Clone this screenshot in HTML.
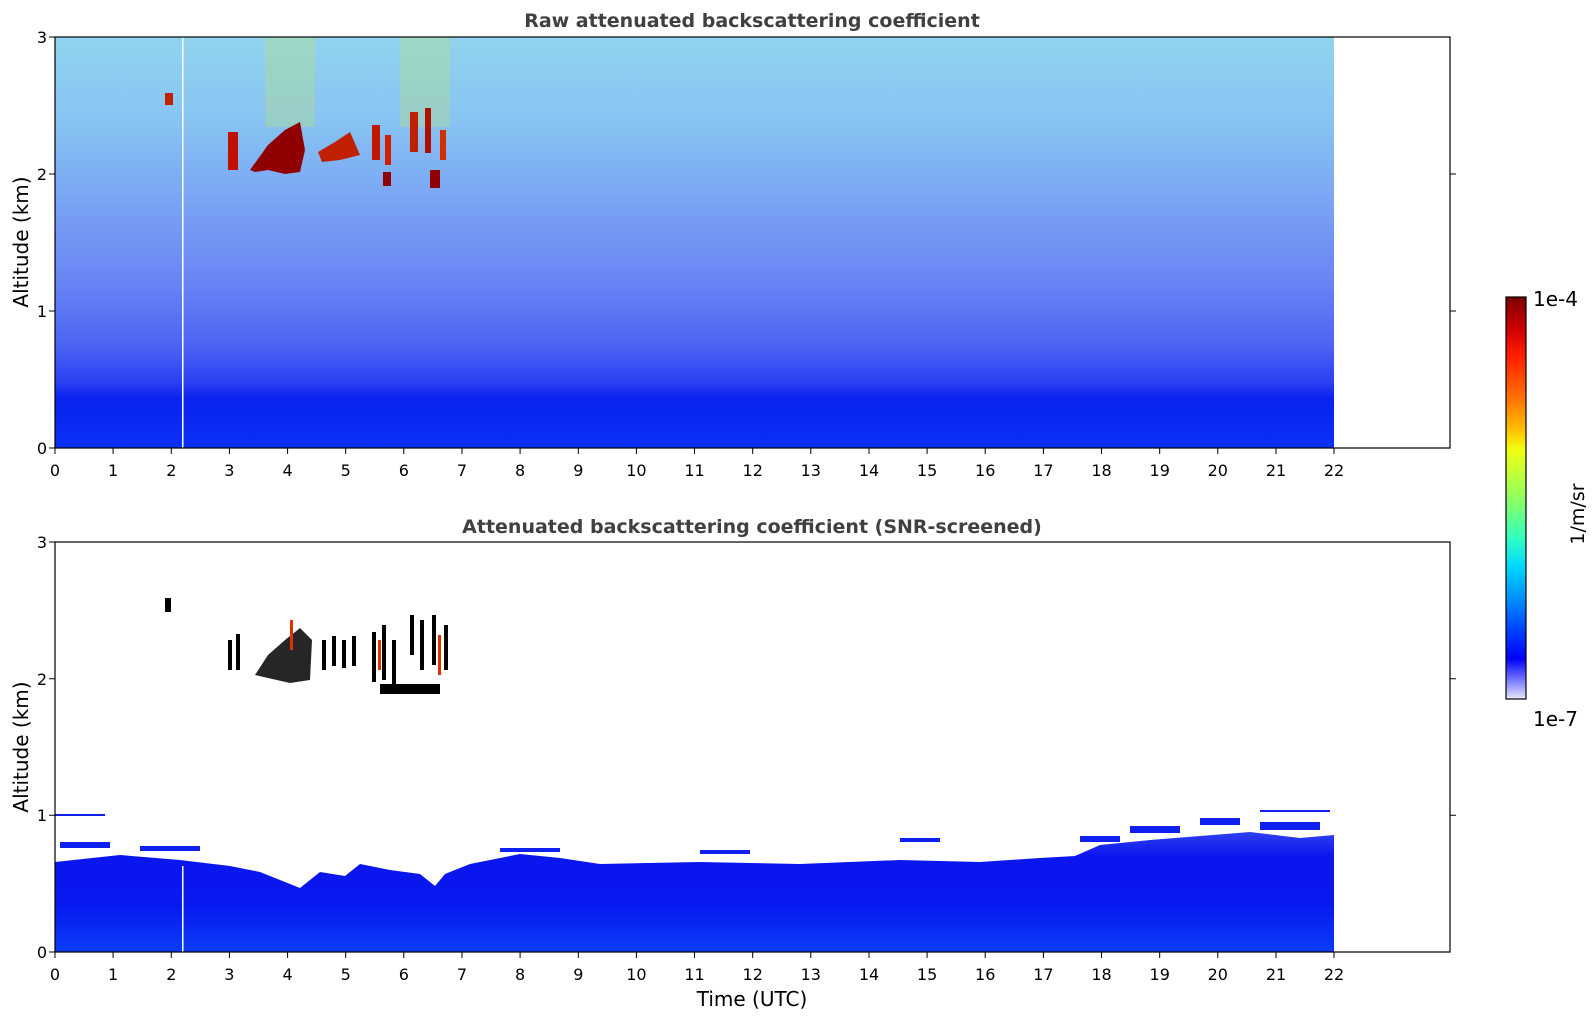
<!DOCTYPE html>
<html><head><meta charset="utf-8"><style>
html,body{margin:0;padding:0;background:#fff;width:1595px;height:1020px;overflow:hidden}
svg text{font-family:"DejaVu Sans","Liberation Sans",sans-serif}
</style></head><body>
<svg width="1595" height="1020" viewBox="0 0 1595 1020" xmlns="http://www.w3.org/2000/svg">
<defs>
<linearGradient id="top" x1="0" y1="0" x2="0" y2="1">
<stop offset="0" stop-color="#90d4ee"/>
<stop offset="0.2" stop-color="#88c4f2"/>
<stop offset="0.4" stop-color="#7aa4f4"/>
<stop offset="0.6" stop-color="#6884f4"/>
<stop offset="0.75" stop-color="#4c64f4"/>
<stop offset="0.84" stop-color="#2a40f2"/>
<stop offset="0.88" stop-color="#0a22f0"/>
<stop offset="1" stop-color="#0a30f6"/>
</linearGradient>
<linearGradient id="bot" x1="0" y1="0" x2="0" y2="1">
<stop offset="0" stop-color="#3040f0"/>
<stop offset="0.2" stop-color="#0a16ee"/>
<stop offset="0.6" stop-color="#0818ee"/>
<stop offset="1" stop-color="#0a3cf8"/>
</linearGradient>
<linearGradient id="cb" x1="0" y1="0" x2="0" y2="1">
<stop offset="0" stop-color="#7a0000"/>
<stop offset="0.08" stop-color="#d00000"/>
<stop offset="0.15" stop-color="#ff2000"/>
<stop offset="0.25" stop-color="#ff7000"/>
<stop offset="0.33" stop-color="#ffc000"/>
<stop offset="0.38" stop-color="#f0ff10"/>
<stop offset="0.5" stop-color="#90ff60"/>
<stop offset="0.6" stop-color="#30ffc0"/>
<stop offset="0.67" stop-color="#00d8ff"/>
<stop offset="0.75" stop-color="#0090ff"/>
<stop offset="0.83" stop-color="#0040ff"/>
<stop offset="0.9" stop-color="#0000f8"/>
<stop offset="0.95" stop-color="#7070ff"/>
<stop offset="1" stop-color="#e8e8ff"/>
</linearGradient>
</defs>

<!-- TOP PLOT -->
<rect x="55" y="37" width="1279" height="411" fill="url(#top)"/>
<rect x="182" y="37" width="1.5" height="411" fill="#fff"/>
<g fill="#b8e07a" opacity="0.35">
<rect x="265" y="37" width="50" height="90"/>
<rect x="400" y="37" width="50" height="90"/>
</g>
<!-- clouds top -->
<g>
<path d="M250 170 L268 145 L285 130 L300 122 L305 150 L300 172 L285 174 L268 170 L255 172Z" fill="#900000"/>
<rect x="228" y="132" width="10" height="38" fill="#c01000"/>
<path d="M318 152 L335 142 L350 132 L360 155 L340 160 L322 162Z" fill="#c02000"/>
<rect x="372" y="125" width="8" height="35" fill="#c01800"/>
<rect x="385" y="135" width="6" height="30" fill="#d02000"/>
<rect x="410" y="112" width="8" height="40" fill="#c02000"/>
<rect x="425" y="108" width="6" height="45" fill="#b01000"/>
<rect x="440" y="130" width="6" height="30" fill="#d03000"/>
<rect x="383" y="172" width="8" height="14" fill="#900000"/>
<rect x="430" y="170" width="10" height="18" fill="#900000"/>
<rect x="165" y="93" width="8" height="12" fill="#c02000"/>
</g>
<rect x="55" y="37" width="1395" height="411" fill="none" stroke="#000" stroke-width="1.2"/>

<!-- BOTTOM PLOT -->
<path d="M55 862 L120 855 L180 860 L230 866 L260 872 L280 880 L300 888 L320 872 L345 876 L360 864 L390 870 L420 874 L435 886 L445 874 L470 864 L520 854 L560 858 L600 864 L700 862 L800 864 L900 860 L980 862 L1040 858 L1075 856 L1100 845 L1150 840 L1200 836 L1250 832 L1300 838 L1334 835 L1334 952 L55 952Z" fill="url(#bot)"/>
<g fill="#1020f0">
<rect x="60" y="842" width="50" height="6"/><rect x="140" y="846" width="60" height="5"/><rect x="1080" y="836" width="40" height="6"/>
<rect x="1130" y="826" width="50" height="7"/><rect x="1200" y="818" width="40" height="7"/><rect x="1260" y="822" width="60" height="8"/>
<rect x="900" y="838" width="40" height="4"/>
<rect x="500" y="848" width="60" height="4"/><rect x="700" y="850" width="50" height="4"/><rect x="55" y="814" width="50" height="2"/>
<rect x="1260" y="810" width="70" height="2"/>
</g>
<rect x="182" y="866" width="1.5" height="86" fill="#fff"/>
<!-- clouds bottom (streaks) -->
<g fill="#000">
<rect x="165" y="598" width="6" height="14"/>
<rect x="228" y="640" width="4" height="30"/><rect x="236" y="634" width="4" height="36"/>
<path d="M255 675 L268 655 L285 640 L300 628 L312 640 L310 680 L290 683 L268 678Z" opacity="0.85"/>
<rect x="322" y="640" width="4" height="30"/><rect x="332" y="636" width="4" height="30"/><rect x="342" y="640" width="4" height="28"/><rect x="352" y="636" width="4" height="30"/>
<rect x="372" y="632" width="4" height="50"/><rect x="382" y="625" width="4" height="55"/><rect x="392" y="640" width="4" height="50"/>
<rect x="410" y="615" width="4" height="40"/><rect x="420" y="620" width="4" height="50"/><rect x="432" y="615" width="4" height="50"/><rect x="444" y="625" width="4" height="45"/>
<rect x="380" y="684" width="60" height="10"/>
</g>
<g fill="#e03000"><rect x="290" y="620" width="3" height="30"/><rect x="438" y="635" width="3" height="40"/><rect x="378" y="640" width="3" height="30"/></g>
<rect x="55" y="542" width="1395" height="410" fill="none" stroke="#000" stroke-width="1.2"/>

<!-- ticks -->
<g stroke="#000" stroke-width="1">
<path d="M55 448v6M113.1 448v6M171.3 448v6M229.4 448v6M287.6 448v6M345.7 448v6M403.8 448v6M462 448v6M520.1 448v6M578.3 448v6M636.4 448v6M694.5 448v6M752.7 448v6M810.8 448v6M869 448v6M927.1 448v6M985.2 448v6M1043.4 448v6M1101.5 448v6M1159.7 448v6M1217.8 448v6M1276 448v6M1334 448v6"/>
<path d="M55 952v6M113.1 952v6M171.3 952v6M229.4 952v6M287.6 952v6M345.7 952v6M403.8 952v6M462 952v6M520.1 952v6M578.3 952v6M636.4 952v6M694.5 952v6M752.7 952v6M810.8 952v6M869 952v6M927.1 952v6M985.2 952v6M1043.4 952v6M1101.5 952v6M1159.7 952v6M1217.8 952v6M1276 952v6M1334 952v6"/>
<path d="M55 448h-6M55 311h-6M55 174h-6M55 37h-6M1450 311h6M1450 174h6"/>
<path d="M55 952h-6M55 815.3h-6M55 678.7h-6M55 542h-6M1450 815.3h6M1450 678.7h6"/>
</g>
<g font-size="16" fill="#000" text-anchor="middle">
<text x="55" y="476">0</text><text x="113.1" y="476">1</text><text x="171.3" y="476">2</text><text x="229.4" y="476">3</text><text x="287.6" y="476">4</text><text x="345.7" y="476">5</text><text x="403.8" y="476">6</text><text x="462" y="476">7</text><text x="520.1" y="476">8</text><text x="578.3" y="476">9</text><text x="636.4" y="476">10</text><text x="694.5" y="476">11</text><text x="752.7" y="476">12</text><text x="810.8" y="476">13</text><text x="869" y="476">14</text><text x="927.1" y="476">15</text><text x="985.2" y="476">16</text><text x="1043.4" y="476">17</text><text x="1101.5" y="476">18</text><text x="1159.7" y="476">19</text><text x="1217.8" y="476">20</text><text x="1276" y="476">21</text><text x="1334" y="476">22</text>
<text x="55" y="980">0</text><text x="113.1" y="980">1</text><text x="171.3" y="980">2</text><text x="229.4" y="980">3</text><text x="287.6" y="980">4</text><text x="345.7" y="980">5</text><text x="403.8" y="980">6</text><text x="462" y="980">7</text><text x="520.1" y="980">8</text><text x="578.3" y="980">9</text><text x="636.4" y="980">10</text><text x="694.5" y="980">11</text><text x="752.7" y="980">12</text><text x="810.8" y="980">13</text><text x="869" y="980">14</text><text x="927.1" y="980">15</text><text x="985.2" y="980">16</text><text x="1043.4" y="980">17</text><text x="1101.5" y="980">18</text><text x="1159.7" y="980">19</text><text x="1217.8" y="980">20</text><text x="1276" y="980">21</text><text x="1334" y="980">22</text>
</g>
<g font-size="16" fill="#000" text-anchor="end">
<text x="47" y="454">0</text><text x="47" y="317">1</text><text x="47" y="180">2</text><text x="47" y="43">3</text>
<text x="47" y="958">0</text><text x="47" y="821">1</text><text x="47" y="685">2</text><text x="47" y="548">3</text>
</g>
<g font-size="20" fill="#000" text-anchor="middle">
<text transform="translate(28,242) rotate(-90)">Altitude (km)</text>
<text transform="translate(28,747) rotate(-90)">Altitude (km)</text>
<text x="752" y="1006">Time (UTC)</text>
</g>
<g font-size="19" font-weight="bold" fill="#404040" text-anchor="middle">
<text x="752" y="27">Raw attenuated backscattering coefficient</text>
<text x="752" y="533">Attenuated backscattering coefficient (SNR-screened)</text>
</g>

<!-- colorbar -->
<rect x="1506" y="297" width="20" height="402" fill="url(#cb)" stroke="#000" stroke-width="1.2"/>
<g font-size="20" fill="#000">
<text x="1533" y="306">1e-4</text>
<text x="1533" y="726">1e-7</text>
<text transform="translate(1584,514) rotate(-90)" text-anchor="middle" font-size="19">1/m/sr</text>
</g>
</svg>
</body></html>
